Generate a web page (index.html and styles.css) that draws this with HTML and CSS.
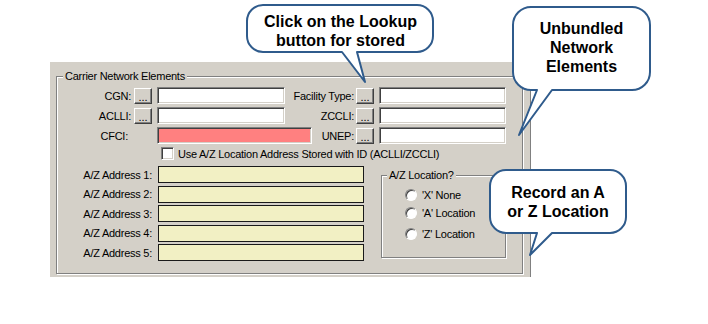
FILE: index.html
```html
<!DOCTYPE html>
<html lang="en">
<head>
  <meta charset="UTF-8" />
  <title>Carrier Network Elements</title>
  <link rel="stylesheet" href="styles.css">
</head>
<body>
  <div class="panel">
    <fieldset class="group carrier">
      <legend>Carrier Network Elements</legend>

      <div class="row">
        <label class="lbl">CGN:</label>
        <button class="dots">...</button>
        <input type="text" class="field left-field" />
        <label class="lbl2">Facility Type:</label>
        <button class="dots">...</button>
        <input type="text" class="field right-field" />
      </div>

      <div class="row">
        <label class="lbl">ACLLI:</label>
        <button class="dots">...</button>
        <input type="text" class="field left-field" />
        <label class="lbl2">ZCCLI:</label>
        <button class="dots">...</button>
        <input type="text" class="field right-field" />
      </div>

      <div class="row">
        <label class="lbl lbl-cfci">CFCI:</label>
        <input type="text" class="field cfci" />
        <label class="lbl2 lbl2-short">UNEP:</label>
        <button class="dots">...</button>
        <input type="text" class="field right-field" />
      </div>

      <div class="check-row">
        <input type="checkbox" class="check" />
        <span>Use A/Z Location Address Stored with ID (ACLLI/ZCCLI)</span>
      </div>

      <div class="lower">
        <div class="addresses">
          <div class="addr-row"><label>A/Z Address 1:</label><input type="text" class="addr" /></div>
          <div class="addr-row"><label>A/Z Address 2:</label><input type="text" class="addr" /></div>
          <div class="addr-row"><label>A/Z Address 3:</label><input type="text" class="addr" /></div>
          <div class="addr-row"><label>A/Z Address 4:</label><input type="text" class="addr" /></div>
          <div class="addr-row"><label>A/Z Address 5:</label><input type="text" class="addr" /></div>
        </div>

        <fieldset class="group location">
          <legend>A/Z Location?</legend>
          <label class="opt opt-x"><input type="radio" name="loc" class="radio" />'X' None</label>
          <label class="opt opt-a"><input type="radio" name="loc" class="radio" />'A' Location</label>
          <label class="opt opt-z"><input type="radio" name="loc" class="radio" />'Z' Location</label>
        </fieldset>
      </div>
    </fieldset>
  </div>

  <!-- callouts laid over the dialog -->
  <div class="callout callout-lookup">
    <svg width="191" height="82" viewBox="0 0 191 82">
      <path d="M18,2 H172 A16,16 0 0 1 188,18 V33 A16,16 0 0 1 172,49 H112 L120,79 L97,49 H18 A16,16 0 0 1 2,33 V18 A16,16 0 0 1 18,2 Z" />
    </svg>
    <p>Click on the Lookup<br>button for stored</p>
  </div>

  <div class="callout callout-une">
    <svg width="148" height="133" viewBox="0 0 148 133">
      <path d="M26,2 H127 A18,18 0 0 1 145,20 V67 A18,18 0 0 1 127,85 H47 L14,130 L32,85 H26 A18,18 0 0 1 8,67 V20 A18,18 0 0 1 26,2 Z" />
    </svg>
    <p>Unbundled<br>Network<br>Elements</p>
  </div>

  <div class="callout callout-loc">
    <svg width="144" height="90" viewBox="0 0 144 90">
      <path d="M21,2 H125 A16,16 0 0 1 141,18 V49 A16,16 0 0 1 125,65 H67 L45,87 L52,65 H21 A16,16 0 0 1 5,49 V18 A16,16 0 0 1 21,2 Z" />
    </svg>
    <p>Record an A<br>or Z Location</p>
  </div>
</body>
</html>
```

FILE: styles.css
```css
body {
  margin: 0;
  background: #fff;
  font-family: "Liberation Sans", Arial, sans-serif;
  font-size: 11px;
  letter-spacing: -0.25px;
  color: #000;
}
.panel {
  box-sizing: border-box;
  width: 481px;
  height: 215px;
  margin: 62px 0 0 50px;
  padding: 8px 7px 0 6px;
  background: #d4d0c8;
  border-right: 1px solid #808080;
}
.group {
  margin: 0;
  padding: 0;
  border: 1px solid #808080;
  box-shadow: 1px 1px 0 #fff, inset 1px 1px 0 #fff;
}
.group legend {
  padding: 0 2px;
  line-height: 13px;
  background: #d4d0c8;
}
.carrier {
  box-sizing: border-box;
  height: 204px;
  padding-top: 4px;
}
.carrier legend {
  margin-left: 6px;
}
.row {
  display: flex;
  align-items: center;
  height: 17px;
  margin-bottom: 3px;
}
.lbl {
  box-sizing: border-box;
  width: 74px;
  margin-right: 3px;
  text-align: right;
}
.lbl-cfci {
  padding-right: 3px;
  margin-right: 26px;
}
.lbl2 {
  width: 69px;
  margin-right: 2px;
  text-align: right;
}
.lbl2-short {
  width: 42px;
}
.dots {
  box-sizing: border-box;
  width: 18px;
  height: 16px;
  margin: 0 5px 0 0;
  padding: 2px 0 0;
  font: 11px "Liberation Sans", Arial, sans-serif;
  line-height: 10px;
  color: #000;
  background: #d4d0c8;
  border: 1px solid;
  border-color: #fff #404040 #404040 #fff;
  box-shadow: inset -1px -1px 0 #808080;
}
.field {
  box-sizing: border-box;
  height: 17px;
  margin: 0;
  padding: 0;
  background: #fff;
  border: 1px solid;
  border-color: #808080 #fff #fff #808080;
  box-shadow: inset 1px 1px 0 #404040, inset -1px -1px 0 #d4d0c8;
}
.left-field {
  width: 128px;
}
.right-field {
  width: 127px;
}
.cfci {
  width: 155px;
  background: #ff8080;
}
.check-row {
  display: flex;
  align-items: center;
  height: 13px;
  margin-top: 3px;
  padding-left: 104px;
}
.check {
  appearance: none;
  box-sizing: border-box;
  width: 13px;
  height: 13px;
  margin: 0 4px 0 0;
  background: #fff;
  border: 1px solid;
  border-color: #808080 #fff #fff #808080;
  box-shadow: inset 1px 1px 0 #404040, inset -1px -1px 0 #d4d0c8;
}
.lower {
  display: flex;
  align-items: flex-start;
  margin-top: 6px;
}
.addresses {
  display: flex;
  flex-direction: column;
  gap: 2.6px;
}
.addr-row {
  display: flex;
  align-items: center;
  height: 17px;
}
.addr-row label {
  width: 95px;
  margin-right: 6px;
  text-align: right;
}
.addr {
  box-sizing: border-box;
  width: 206px;
  height: 17px;
  margin: 0;
  padding: 0;
  background: #f2f0c4;
  border: 1px solid #1a1a1a;
}
.location {
  box-sizing: border-box;
  width: 125px;
  height: 89px;
  margin: 3px 0 0 17px;
  padding: 0 0 0 23px;
}
.location legend {
  margin-left: -18px;
}
.opt {
  display: flex;
  align-items: center;
  height: 13px;
}
.opt-x {
  margin-top: 6px;
}
.opt-a {
  margin-top: 5px;
}
.opt-z {
  margin-top: 8px;
}
.radio {
  appearance: none;
  box-sizing: border-box;
  width: 12px;
  height: 12px;
  margin: 0 5px 0 0;
  border-radius: 50%;
  background: #fff;
  border: 1px solid;
  border-color: #808080 #fff #fff #808080;
  box-shadow: inset 1px 1px 0 #404040;
}
.callout {
  position: absolute;
}
.callout svg {
  position: absolute;
  top: 0;
  left: 0;
}
.callout path {
  fill: #fff;
  stroke: #2f5b8c;
  stroke-width: 2;
  stroke-linejoin: round;
}
.callout p {
  position: relative;
  margin: 0;
  font-size: 16px;
  font-weight: bold;
  line-height: 19px;
  letter-spacing: 0;
  text-align: center;
}
.callout-lookup {
  left: 245px;
  top: 3px;
  width: 191px;
  height: 82px;
}
.callout-lookup p {
  padding-top: 9px;
}
.callout-une {
  left: 505px;
  top: 5px;
  width: 148px;
  height: 133px;
}
.callout-une p {
  width: 137px;
  margin-left: 8px;
  padding-top: 14px;
}
.callout-loc {
  left: 485px;
  top: 168px;
  width: 144px;
  height: 90px;
}
.callout-loc p {
  width: 136px;
  margin-left: 5px;
  padding-top: 15px;
}
```
